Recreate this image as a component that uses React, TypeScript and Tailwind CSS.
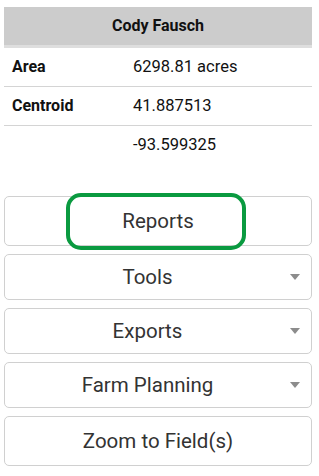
import type { ReactNode } from 'react';

const Caret = () => (
  <svg
    className="absolute right-[11px] top-1/2 -translate-y-1/2"
    width="10"
    height="6"
    viewBox="0 0 10 6"
  >
    <path d="M0 0 H10 L5 6 Z" fill="#8c8c8c" />
  </svg>
);

type ActionProps = {
  label: string;
  dropdown?: boolean;
  tall?: boolean;
  children?: ReactNode;
};

const ActionButton = ({ label, dropdown, tall, children }: ActionProps) => (
  <div
    className={`relative flex items-center justify-center rounded-[5px] border border-[#d0d0d0] bg-white text-[20.5px] text-[#333] ${
      tall ? 'h-[50px]' : 'h-[46px]'
    } ${dropdown ? 'pr-[21px]' : ''}`}
  >
    <span>{label}</span>
    {dropdown && <Caret />}
    {children}
  </div>
);

const rows = [
  { label: 'Area', value: '6298.81 acres' },
  { label: 'Centroid', value: '41.887513' },
  { label: '', value: '-93.599325', last: true },
];

export default function App() {
  return (
    <div className="min-h-screen bg-white pl-[4px] pr-[7px] pt-[7px] font-['Roboto',sans-serif]">
      <div className="flex h-[38px] items-center justify-center bg-[#cccccc] text-[16px] font-bold text-[#111]">
        Cody Fausch
      </div>
      <div className="h-[3px] bg-[#dedede]" />
      <div>
        {rows.map((row) => (
          <div
            key={row.value}
            className={`flex h-[39px] items-center text-[16.5px] text-[#111] ${
              row.last ? '' : 'border-b border-[#d4d4d4]'
            }`}
          >
            <span className="w-[129px] pl-[8px] font-bold text-[16px]">{row.label}</span>
            <span>{row.value}</span>
          </div>
        ))}
      </div>

      <div className="mt-[31px] flex flex-col gap-2">
        <ActionButton label="Reports" tall>
          <div className="absolute left-[61px] top-[-4px] h-[57px] w-[180px] rounded-[15px] border-[4px] border-[#0a9a40]" />
        </ActionButton>
        <ActionButton label="Tools" dropdown />
        <ActionButton label="Exports" dropdown />
        <ActionButton label="Farm Planning" dropdown />
        <ActionButton label="Zoom to Field(s)" tall />
      </div>
    </div>
  );
}
